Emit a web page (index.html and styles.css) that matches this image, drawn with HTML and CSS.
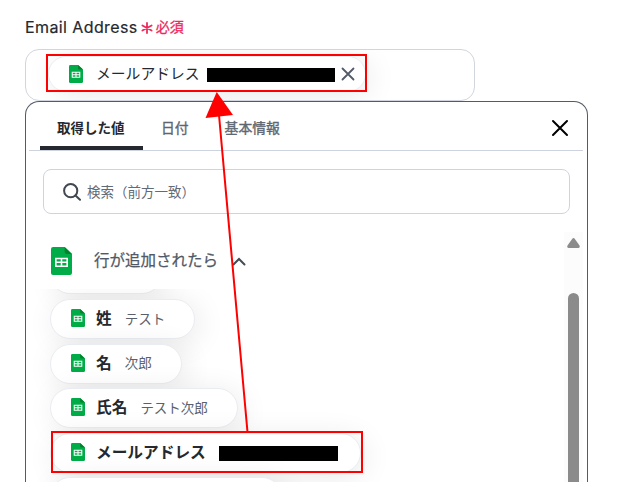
FILE: index.html
```html
<!DOCTYPE html>
<html lang="ja">
<head>
    <meta charset="UTF-8">
    <meta name="viewport" content="width=device-width, initial-scale=1.0">
    <title>Email Address</title>
    <link rel="stylesheet" href="styles.css">
</head>
<body>
    <svg width="0" height="0" class="defs">
        <symbol id="sheet" viewBox="0 0 20 28" preserveAspectRatio="none">
            <path fill="#00ac47" d="M2 0h11l7 7v19a2 2 0 0 1-2 2H2a2 2 0 0 1-2-2V2a2 2 0 0 1 2-2z"/>
            <path fill="#00832d" d="M13 0l7 7h-5a2 2 0 0 1-2-2z"/>
            <path fill="none" stroke="#fff" stroke-width="1.5" d="M4.6 11.4h10.8v7.8H4.6zM10 11.4v7.8M4.6 15.3h10.8"/>
        </symbol>
    </svg>

    <div class="field">
        <div class="label">
            <span>Email Address</span>
            <svg class="asterisk" viewBox="0 0 12 12"><path d="M6 1v10M1.4 3.5l9.2 5M10.6 3.5l-9.2 5"/></svg>
            <span class="required">必須</span>
        </div>
        <div class="input">
            <div class="chip selected">
                <svg class="icon"><use href="#sheet"/></svg>
                <span class="name">メールアドレス</span>
                <span class="mask"></span>
                <svg class="remove" viewBox="0 0 14 14"><path d="M1.5 1.5l11 11M12.5 1.5l-11 11"/></svg>
            </div>
        </div>
    </div>

    <div class="popup">
        <div class="tabs">
            <div class="tab active">取得した値</div>
            <div class="tab">日付</div>
            <div class="tab">基本情報</div>
            <svg class="close" viewBox="0 0 18 18"><path d="M2 2l14 14M16 2L2 16"/></svg>
        </div>
        <div class="search">
            <svg viewBox="0 0 18 18"><circle cx="7.7" cy="7.7" r="6.6"/><path d="M12.5 12.5l4.5 4.3"/></svg>
            <span>検索（前方一致）</span>
        </div>
        <div class="content">
            <div class="main">
                <div class="group">
                    <svg class="group-icon"><use href="#sheet"/></svg>
                    <span>行が追加されたら</span>
                    <svg class="chevron" viewBox="0 0 14 9"><path d="M1.5 7.5L7 2l5.5 5.5"/></svg>
                </div>
                <div class="list">
                    <div class="chip blank first"></div>
                    <div class="chip">
                        <svg class="icon"><use href="#sheet"/></svg>
                        <span class="name">姓</span>
                        <span class="value">テスト</span>
                    </div>
                    <div class="chip">
                        <svg class="icon"><use href="#sheet"/></svg>
                        <span class="name">名</span>
                        <span class="value">次郎</span>
                    </div>
                    <div class="chip">
                        <svg class="icon"><use href="#sheet"/></svg>
                        <span class="name">氏名</span>
                        <span class="value">テスト次郎</span>
                    </div>
                    <div class="chip mail">
                        <svg class="icon"><use href="#sheet"/></svg>
                        <span class="name">メールアドレス</span>
                        <span class="mask"></span>
                    </div>
                    <div class="chip blank last"></div>
                </div>
            </div>
            <div class="scrollbar">
                <svg viewBox="0 0 13 10"><path d="M5.3.8Q6.5-.6 7.7.8L12.5 7.5Q13.4 10 11.5 10H1.5Q-.4 10 .5 7.5z"/></svg>
                <div class="thumb"></div>
            </div>
        </div>
    </div>

    <!-- annotations -->
    <div class="mark mark-top"></div>
    <div class="mark mark-bottom"></div>
    <svg class="arrow" viewBox="0 0 623 482">
        <path class="line" d="M247.5 432L219 115"/>
        <path class="head" d="M216.7 92L233 115L205.5 118z"/>
    </svg>
</body>
</html>
```
FILE: styles.css
```css
* {
    box-sizing: border-box;
}
body {
    margin: 0;
    width: 623px;
    height: 482px;
    position: relative;
    overflow: hidden;
    background-color: #fff;
    color: #25292f;
    font-family: Inter, "Noto Sans CJK JP", sans-serif;
    padding: 17px 0 0 25px;
}
svg {
    display: block;
    flex: none;
    fill: none;
    stroke-linecap: round;
}
span {
    white-space: nowrap;
}
.defs {
    position: absolute;
}
.label {
    display: flex;
    align-items: center;
    height: 20px;
    font-size: 16px;
    letter-spacing: 0.4px;
    -webkit-text-stroke: 0.2px;
}
.asterisk {
    width: 12px;
    height: 12px;
    margin: 2px 3px 0 3px;
    stroke: #ee2a5b;
    stroke-width: 1.8;
}
.required {
    color: #ee2a5b;
    font-size: 14px;
    letter-spacing: 0;
    margin-top: -2px;
    -webkit-text-stroke: 0.3px;
}
.input {
    width: 450px;
    height: 52px;
    margin-top: 12px;
    padding: 6px 0 0 22px;
    border: 1px solid #d0d5de;
    border-radius: 14px;
    overflow: hidden;
}
.chip {
    display: flex;
    align-items: center;
    width: fit-content;
    height: 40px;
    padding: 0 29px 2px 20px;
    border: 1px solid #e9ecf1;
    border-radius: 20px;
    background-color: #fff;
    box-shadow: 4px 4px 30px rgba(0, 0, 0, 0.09);
}
.icon {
    width: 14px;
    height: 18px;
    margin-right: 10px;
}
.name {
    font-size: 15.7px;
    font-weight: 700;
}
.list .name {
    margin: -1px 0 0 1px;
}
.value {
    margin: -1px 0 0 13px;
    font-size: 13.5px;
    color: #59616c;
}
.mask {
    flex: none;
    background-color: #000;
}
.selected {
    width: 318px;
    height: 36px;
    padding: 0 10px 0 20px;
}
.selected .icon {
    margin-right: 13px;
}
.selected .name {
    flex: none;
    width: 111px;
    margin-top: -4px;
    font-size: 14.8px;
    font-weight: 400;
}
.selected .mask {
    width: 128px;
    height: 14px;
    margin-top: 2px;
}
.remove {
    width: 14px;
    height: 14px;
    margin-left: 6px;
    stroke: #535a68;
    stroke-width: 1.8;
}
.popup {
    width: 563px;
    height: 381px;
    border: 1px solid #535b67;
    border-bottom: none;
    border-radius: 14px 14px 0 0;
    background-color: #fff;
    overflow: hidden;
}
.tabs {
    display: flex;
    height: 49px;
    margin: 0 4px 0 3px;
    padding-left: 11px;
    border-bottom: 1px solid #ced4df;
    font-size: 13.8px;
    color: #5e6671;
    -webkit-text-stroke: 0.35px;
}
.tab {
    line-height: 52px;
    margin-right: 36px;
}
.tab.active {
    width: 103px;
    height: 48px;
    margin-right: 18px;
    padding-left: 17px;
    color: #25292f;
    border-bottom: 4px solid #25292f;
    border-radius: 3px 3px 0 0;
    font-size: 13.5px;
    font-weight: 700;
    -webkit-text-stroke: 0;
}
.close {
    width: 18px;
    height: 18px;
    margin: 17px 14px 0 auto;
    stroke: #000;
    stroke-width: 2;
}
.search {
    display: flex;
    align-items: center;
    gap: 6px;
    width: 527px;
    height: 45px;
    margin: 18px 0 0 17px;
    padding-left: 19px;
    border: 1px solid #ced4df;
    border-radius: 8px;
    color: #626a75;
    font-size: 13.5px;
}
.search span {
    margin-top: -2px;
}
.search svg {
    width: 18px;
    height: 18px;
    stroke: #414852;
    stroke-width: 2;
}
.content {
    display: flex;
    margin-top: 18px;
}
.main {
    width: 538px;
}
.group {
    display: flex;
    align-items: center;
    height: 57px;
    padding-left: 25px;
    font-size: 15.5px;
    color: #515966;
    -webkit-text-stroke: 0.25px;
}
.group span {
    margin-top: -3px;
}
.group-icon {
    width: 21px;
    height: 28px;
    margin: 1px 22px 0 0;
}
.chevron {
    width: 14px;
    height: 9px;
    margin: 2px 0 0 14px;
    stroke: #454c56;
    stroke-width: 2;
}
.list {
    display: flex;
    flex-direction: column;
    gap: 4.6px;
    height: 193px;
    padding-left: 24px;
    overflow: hidden;
}
.list .chip {
    flex: none;
}
.list .blank.first {
    width: 112px;
    margin-top: -34.6px;
}
.list .blank.last {
    width: 232px;
}
.list .mail {
    width: 311px;
    padding-right: 0;
}
.mail .mask {
    width: 119px;
    height: 15px;
    margin: 4px 0 0 13px;
}
.scrollbar {
    width: 19px;
    padding-top: 6px;
    background-color: #fcfcfc;
}
.scrollbar svg {
    width: 13px;
    height: 10px;
    margin-left: 3px;
    fill: #8b8b8b;
}
.thumb {
    width: 11px;
    height: 189px;
    margin: 45px 0 0 4px;
    border-radius: 6px 6px 0 0;
    background-color: #8b8b8b;
}
.mark {
    position: absolute;
    border: 2px solid #f00;
}
.mark-top {
    left: 46px;
    top: 54px;
    width: 321px;
    height: 38px;
}
.mark-bottom {
    left: 51px;
    top: 431px;
    width: 312px;
    height: 42px;
}
.arrow {
    position: absolute;
    left: 0;
    top: 0;
    width: 623px;
    height: 482px;
}
.line {
    stroke: #f00;
    stroke-width: 2;
}
.head {
    fill: #f00;
}
```
